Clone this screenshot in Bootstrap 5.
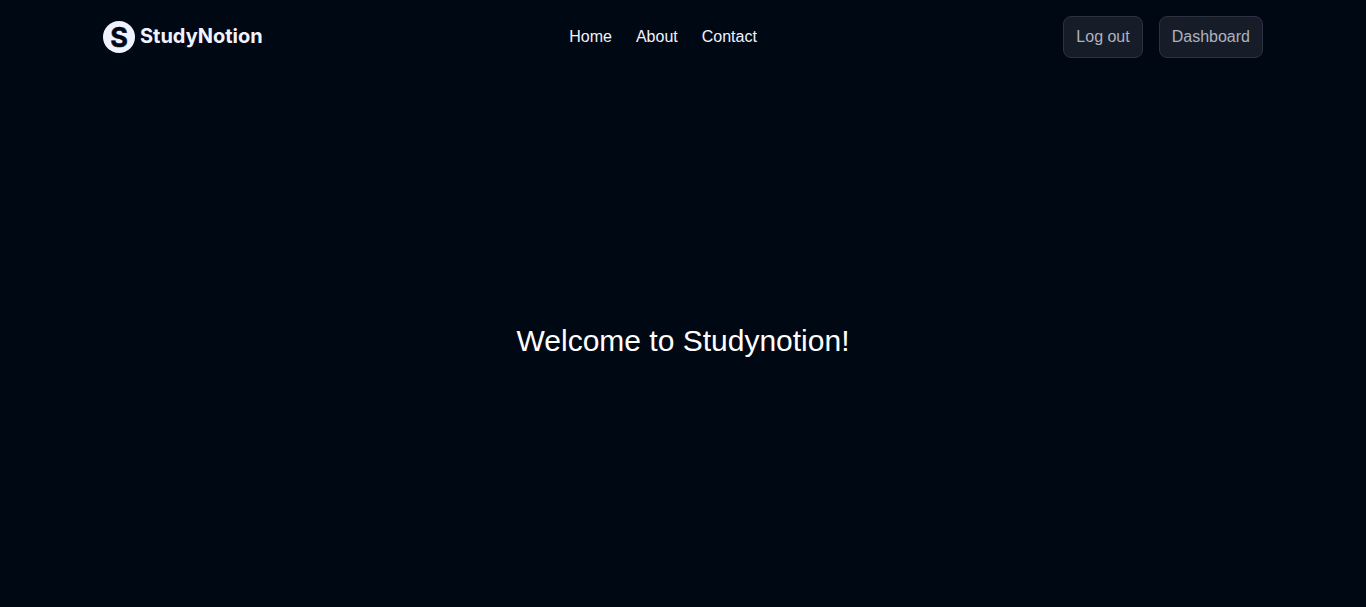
<!DOCTYPE html>
<html lang="en">
<head>
<meta charset="utf-8">
<meta name="viewport" content="width=device-width, initial-scale=1">
<title>StudyNotion</title>
<link href="https://cdn.jsdelivr.net/npm/bootstrap@5.3.0/dist/css/bootstrap.min.css" rel="stylesheet">
<style>
  body { background: #000814; color: #fff; font-family: "Liberation Sans", Arial, sans-serif; }
  .page-bar { width: 100%; max-width: 1160px; }
  .brand-link { gap: 5px; }
  .brand-name { font-family: Inter, sans-serif; font-weight: 700; font-size: 20px; line-height: 30px; color: #f1f2ff; }
  .brand-mark text { font-family: Inter, sans-serif; font-weight: 700; font-size: 27px; }
  .main-links a { color: #f1f2ff; }
  .btn-panel { --bs-btn-color: #afb2bf; --bs-btn-bg: #161d29; --bs-btn-border-color: #2c333f; --bs-btn-hover-color: #f1f2ff; --bs-btn-hover-bg: #2c333f;
    --bs-btn-padding-x: 12px; --bs-btn-padding-y: 8px; --bs-btn-border-radius: 8px; }
  .welcome { font-size: 30px; line-height: 36px; font-weight: 400; }
</style>
</head>
<body class="d-flex flex-column min-vh-100">
  <header class="page-bar mx-auto py-3 d-flex flex-wrap align-items-center justify-content-between gap-3">
    <a href="#" class="brand-link d-flex align-items-start text-decoration-none" aria-label="StudyNotion home">
      <svg class="brand-mark" width="32" height="32" viewBox="0 0 32 32" aria-hidden="true">
        <circle cx="16" cy="16" r="16" fill="#f1f2ff"/>
        <text x="16" y="26" text-anchor="middle" fill="#000814" stroke="#000814" stroke-width=".5">S</text>
      </svg>
      <span class="brand-name">StudyNotion</span>
    </a>
    <nav aria-label="Main">
      <ul class="main-links list-unstyled d-flex gap-4 mb-0">
        <li><a href="#" class="text-decoration-none">Home</a></li>
        <li><a href="#" class="text-decoration-none">About</a></li>
        <li><a href="#" class="text-decoration-none">Contact</a></li>
      </ul>
    </nav>
    <div class="d-flex gap-3">
      <button type="button" class="btn btn-panel">Log out</button>
      <button type="button" class="btn btn-panel">Dashboard</button>
    </div>
  </header>
  <main class="flex-grow-1 d-flex align-items-center justify-content-center">
    <h1 class="welcome mb-0">Welcome to Studynotion!</h1>
  </main>
  <script src="https://cdn.jsdelivr.net/npm/bootstrap@5.3.0/dist/js/bootstrap.bundle.min.js"></script>
</body>
</html>
